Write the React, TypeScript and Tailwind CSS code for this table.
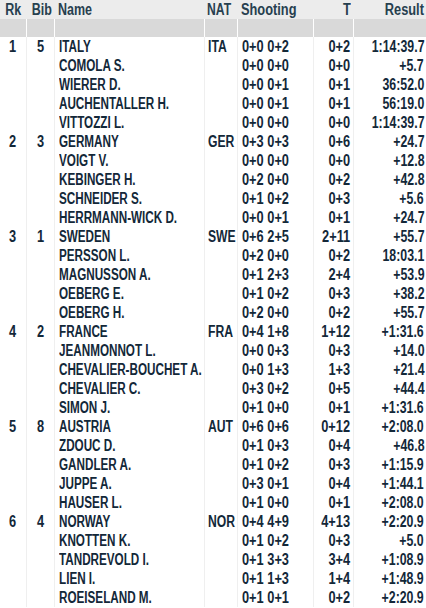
import React from 'react';

type Row = { rk: string; bib: string; name: string; nat: string; shoot: string; t: string; res: string };

const teams: string[][][] = [
  [
    ['1', '5', 'ITALY', 'ITA', '0+0 0+2', '0+2', '1:14:39.7'],
    ['', '', 'COMOLA S.', '', '0+0 0+0', '0+0', '+5.7'],
    ['', '', 'WIERER D.', '', '0+0 0+1', '0+1', '36:52.0'],
    ['', '', 'AUCHENTALLER H.', '', '0+0 0+1', '0+1', '56:19.0'],
    ['', '', 'VITTOZZI L.', '', '0+0 0+0', '0+0', '1:14:39.7'],
  ],
  [
    ['2', '3', 'GERMANY', 'GER', '0+3 0+3', '0+6', '+24.7'],
    ['', '', 'VOIGT V.', '', '0+0 0+0', '0+0', '+12.8'],
    ['', '', 'KEBINGER H.', '', '0+2 0+0', '0+2', '+42.8'],
    ['', '', 'SCHNEIDER S.', '', '0+1 0+2', '0+3', '+5.6'],
    ['', '', 'HERRMANN-WICK D.', '', '0+0 0+1', '0+1', '+24.7'],
  ],
  [
    ['3', '1', 'SWEDEN', 'SWE', '0+6 2+5', '2+11', '+55.7'],
    ['', '', 'PERSSON L.', '', '0+2 0+0', '0+2', '18:03.1'],
    ['', '', 'MAGNUSSON A.', '', '0+1 2+3', '2+4', '+53.9'],
    ['', '', 'OEBERG E.', '', '0+1 0+2', '0+3', '+38.2'],
    ['', '', 'OEBERG H.', '', '0+2 0+0', '0+2', '+55.7'],
  ],
  [
    ['4', '2', 'FRANCE', 'FRA', '0+4 1+8', '1+12', '+1:31.6'],
    ['', '', 'JEANMONNOT L.', '', '0+0 0+3', '0+3', '+14.0'],
    ['', '', 'CHEVALIER-BOUCHET A.', '', '0+0 1+3', '1+3', '+21.4'],
    ['', '', 'CHEVALIER C.', '', '0+3 0+2', '0+5', '+44.4'],
    ['', '', 'SIMON J.', '', '0+1 0+0', '0+1', '+1:31.6'],
  ],
  [
    ['5', '8', 'AUSTRIA', 'AUT', '0+6 0+6', '0+12', '+2:08.0'],
    ['', '', 'ZDOUC D.', '', '0+1 0+3', '0+4', '+46.8'],
    ['', '', 'GANDLER A.', '', '0+1 0+2', '0+3', '+1:15.9'],
    ['', '', 'JUPPE A.', '', '0+3 0+1', '0+4', '+1:44.1'],
    ['', '', 'HAUSER L.', '', '0+1 0+0', '0+1', '+2:08.0'],
  ],
  [
    ['6', '4', 'NORWAY', 'NOR', '0+4 4+9', '4+13', '+2:20.9'],
    ['', '', 'KNOTTEN K.', '', '0+1 0+2', '0+3', '+5.0'],
    ['', '', 'TANDREVOLD I.', '', '0+1 3+3', '3+4', '+1:08.9'],
    ['', '', 'LIEN I.', '', '0+1 1+3', '1+4', '+1:48.9'],
    ['', '', 'ROEISELAND M.', '', '0+1 0+1', '0+2', '+2:20.9'],
  ],
];

const rows: Row[] = teams.flat().map(([rk, bib, name, nat, shoot, t, res]) => ({ rk, bib, name, nat, shoot, t, res }));

// no condensed face in the sandbox, so squeeze the glyphs per column
const Sq = ({ cls, children }: { cls: string; children: React.ReactNode }) => (
  <span className={`inline-block whitespace-pre ${cls}`}>{children}</span>
);

const nameSq = 'scale-x-[0.73] origin-left';
const natSq = 'scale-x-[0.76] origin-left';
const shootSq = 'scale-x-[0.8] origin-left';
const tSq = 'scale-x-[0.8] origin-right';
const resSq = 'scale-x-[0.77] origin-right';
const numSq = 'scale-x-[0.8] origin-center';

const line = 'border-l border-[#efefef]';
const sep = 'border-l border-white';

export default function App() {
  return (
    <div className="w-[426px] h-[608px] overflow-hidden bg-white text-[#132839] font-['Liberation_Sans',Arial,sans-serif] text-[16px] font-bold leading-[19px]">
      <table className="w-full table-fixed border-collapse">
        <colgroup>
          <col className="w-[26px]" />
          <col className="w-[28px]" />
          <col className="w-[150px]" />
          <col className="w-[33px]" />
          <col className="w-[76px]" />
          <col className="w-[40px]" />
          <col />
        </colgroup>
        <thead>
          <tr className="h-[19px] bg-[#ececec] text-[#27404f]">
            <th className="text-center font-bold whitespace-nowrap"><Sq cls="scale-x-[0.78] origin-center">Rk</Sq></th>
            <th className="text-center font-bold whitespace-nowrap pl-[3px]"><Sq cls="scale-x-[0.78] origin-center">Bib</Sq></th>
            <th className="text-left pl-[4px] font-bold whitespace-nowrap"><Sq cls="scale-x-[0.78] origin-left">Name</Sq></th>
            <th className="text-left pl-[3px] font-bold whitespace-nowrap"><Sq cls={natSq}>NAT</Sq></th>
            <th className="text-left pl-[4px] font-bold whitespace-nowrap"><Sq cls="scale-x-[0.8] origin-left">Shooting</Sq></th>
            <th className="text-right pr-[2px] font-bold whitespace-nowrap"><Sq cls={tSq}>T</Sq></th>
            <th className="text-right pr-[2px] font-bold whitespace-nowrap"><Sq cls="scale-x-[0.8] origin-right">Result</Sq></th>
          </tr>
          <tr className="h-[18px] bg-[#d9d9d9]">
            <th />
            <th className={sep} />
            <th className={sep} />
            <th className={sep} />
            <th className={sep} />
            <th className={sep} />
            <th className={sep} />
          </tr>
        </thead>
        <tbody>
          {rows.map((r, i) => (
            <tr key={i} className="h-[19px]">
              <td className="text-center whitespace-nowrap"><Sq cls={numSq}>{r.rk}</Sq></td>
              <td className={`text-center whitespace-nowrap ${line}`}><Sq cls={numSq}>{r.bib}</Sq></td>
              <td className={`pl-[4px] whitespace-nowrap ${line}`}><Sq cls={nameSq}>{r.name}</Sq></td>
              <td className={`pl-[3px] whitespace-nowrap ${line}`}><Sq cls={natSq}>{r.nat}</Sq></td>
              <td className={`pl-[4px] whitespace-nowrap ${line}`}><Sq cls={shootSq}>{r.shoot}</Sq></td>
              <td className={`text-right pr-[2px] whitespace-nowrap ${line}`}><Sq cls={tSq}>{r.t}</Sq></td>
              <td className={`text-right pr-[2px] whitespace-nowrap ${line}`}><Sq cls={resSq}>{r.res}</Sq></td>
            </tr>
          ))}
        </tbody>
      </table>
    </div>
  );
}
